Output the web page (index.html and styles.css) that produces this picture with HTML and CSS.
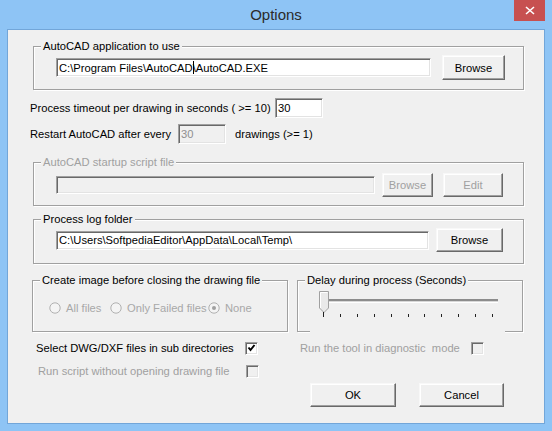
FILE: index.html
```html
<!DOCTYPE html>
<html>
<head>
<meta charset="utf-8">
<title>Options</title>
<link rel="stylesheet" href="styles.css">
</head>
<body>
<div class="window">
  <div class="titlebar">
    <span class="title">Options</span>
    <div class="close">
      <svg width="10" height="9" viewBox="0 0 10 9"><path d="M1 1 L9 8 M9 1 L1 8" stroke="#fff" stroke-width="1.6" fill="none"/></svg>
    </div>
  </div>
  <div class="client">
    <fieldset class="group g-app">
      <legend>AutoCAD application to use</legend>
      <div class="row r-app">
        <div class="tb tb-app">C:\Program Files\AutoCAD<span class="caret"></span>\AutoCAD.EXE</div>
        <div class="btn btn-app">Browse</div>
      </div>
    </fieldset>

    <div class="line l-timeout">
      <span class="lbl w-timeout">Process timeout per drawing in seconds ( &gt;= 10)</span>
      <div class="tb num">30</div>
    </div>
    <div class="line l-restart">
      <span class="lbl w-restart">Restart AutoCAD after every</span>
      <div class="tb num disabled">30</div>
      <span class="lbl after">drawings (&gt;= 1)</span>
    </div>

    <fieldset class="group g-script disabled">
      <legend>AutoCAD startup script file</legend>
      <div class="row r-script">
        <div class="tb tb-script disabled"></div>
        <div class="btn btn-sbrowse disabled">Browse</div>
        <div class="btn btn-edit disabled">Edit</div>
      </div>
    </fieldset>

    <fieldset class="group g-log">
      <legend>Process log folder</legend>
      <div class="row r-log">
        <div class="tb tb-log">C:\Users\SoftpediaEditor\AppData\Local\Temp\</div>
        <div class="btn btn-log">Browse</div>
      </div>
    </fieldset>

    <div class="pair">
      <fieldset class="group g-image">
        <legend>Create image before closing the drawing file</legend>
        <div class="radios">
          <div class="radio ri-1 disabled">
            <svg width="12" height="12" viewBox="0 0 12 12"><circle cx="6" cy="6" r="5.2" fill="#f4f4f4" stroke="#b0b0b0" stroke-width="1"/></svg>
            <span>All files</span>
          </div>
          <div class="radio ri-2 disabled">
            <svg width="12" height="12" viewBox="0 0 12 12"><circle cx="6" cy="6" r="5.2" fill="#f4f4f4" stroke="#b0b0b0" stroke-width="1"/></svg>
            <span>Only Failed files</span>
          </div>
          <div class="radio ri-3 disabled">
            <svg width="12" height="12" viewBox="0 0 12 12"><circle cx="6" cy="6" r="5.2" fill="#f4f4f4" stroke="#b0b0b0" stroke-width="1"/><circle cx="6" cy="6" r="2" fill="#a0a0a0"/></svg>
            <span>None</span>
          </div>
        </div>
      </fieldset>
      <fieldset class="group g-delay">
        <legend>Delay during process (Seconds)</legend>
        <div class="trackbar">
          <svg width="195" height="46" viewBox="0 0 195 46">
            <rect x="14" y="12" width="174" height="2" fill="#8c8c8c"/>
            <rect x="14" y="14" width="174" height="1" fill="#d8d8d8"/>
            <rect x="14" y="15" width="174" height="1" fill="#ffffff"/>
            <polygon points="9.5,4.5 18.5,4.5 18.5,21 14,25.5 9.5,21" fill="#e9e9e9" stroke="#a0a0a0" stroke-width="1"/>
            <polyline points="10.5,21 10.5,5.5 17.5,5.5" fill="none" stroke="#ffffff" stroke-width="1"/>
            <rect x="13" y="25" width="1" height="5" fill="#222"/>
            <rect x="30" y="27" width="1" height="3" fill="#222"/>
            <rect x="47" y="27" width="1" height="3" fill="#222"/>
            <rect x="64" y="27" width="1" height="3" fill="#222"/>
            <rect x="81" y="27" width="1" height="3" fill="#222"/>
            <rect x="98" y="27" width="1" height="3" fill="#222"/>
            <rect x="114" y="27" width="1" height="3" fill="#222"/>
            <rect x="131" y="27" width="1" height="3" fill="#222"/>
            <rect x="148" y="27" width="1" height="3" fill="#222"/>
            <rect x="165" y="27" width="1" height="3" fill="#222"/>
            <rect x="182" y="27" width="1" height="3" fill="#222"/>
          </svg>
        </div>
      </fieldset>
    </div>

    <div class="checks c-1">
      <span class="lbl w-sub">Select DWG/DXF files in sub directories</span>
      <div class="cb">
        <svg width="11" height="11" viewBox="0 0 11 11"><path d="M2.5 4.5 L4.5 7 L8.5 2" stroke="#000" stroke-width="2" fill="none"/></svg>
      </div>
      <span class="lbl w-diag disabled">Run the tool in diagnostic&nbsp; mode</span>
      <div class="cb disabled"></div>
    </div>
    <div class="checks c-2">
      <span class="lbl w-noopen disabled">Run script without opening drawing file</span>
      <div class="cb disabled"></div>
    </div>

    <div class="actions">
      <div class="btn btn-ok">OK</div>
      <div class="btn btn-cancel">Cancel</div>
    </div>
  </div>
</div>
</body>
</html>
```

FILE: styles.css
```css
* { box-sizing: border-box; }

body {
  margin: 0;
  font-family: "Liberation Sans", Arial, sans-serif;
  font-size: 11.2px;
  color: #000;
}

.window {
  width: 552px;
  height: 431px;
  background: #8ec4f5;
  padding: 0 7px 7px 7px;
  display: flex;
  flex-direction: column;
}

.titlebar {
  height: 29px;
  display: grid;
  grid-template-columns: 1fr auto 1fr;
  align-items: start;
}

.title {
  grid-column: 2;
  font-size: 15px;
  line-height: 30px;
  color: #2b2b2b;
}

.close {
  grid-column: 3;
  justify-self: end;
  width: 31px;
  height: 21px;
  background: #c75050;
  display: flex;
  align-items: center;
  justify-content: center;
}

.client {
  flex: 1;
  background: #f0f0f0;
  border: 1px solid #72a6d9;
}

/* group boxes */
.group {
  margin: 0;
  border: 1px solid #a0a0a0;
  box-shadow: inset 1px 1px 0 #fff, 1px 1px 0 #fff;
  padding: 0 0 9px 7px;
  min-inline-size: 0;
}

.group legend {
  padding: 0 2px;
  margin: 0;
  line-height: 13px;
  background: #f0f0f0;
  white-space: nowrap;
}

.group.disabled legend { color: #a0a0a0; }

.row {
  display: flex;
  align-items: center;
  margin-left: 15px;
}

/* text boxes */
.tb {
  background: #fff;
  border: 1px solid;
  border-color: #a0a0a0 #fff #fff #a0a0a0;
  box-shadow: inset 1px 1px 0 #696969, inset -1px -1px 0 #e3e3e3;
  padding: 0 0 0 2px;
  height: 19px;
  display: flex;
  align-items: center;
  white-space: nowrap;
  overflow: hidden;
}

.tb.disabled {
  background: #f0f0f0;
  color: #8f8f8f;
}

.caret {
  display: inline-block;
  width: 0;
  height: 13px;
  border-left: 1px solid #000;
  margin-right: -1px;
}

/* buttons */
.btn {
  background: #f0f0f0;
  border: 1px solid;
  border-color: #f8f8f8 #696969 #696969 #f8f8f8;
  box-shadow: inset -1px -1px 0 #a0a0a0, inset 1px 1px 0 #fff;
  display: flex;
  align-items: center;
  justify-content: center;
  height: 25px;
}

.btn.disabled { color: #a0a0a0; }

/* group 1 */
.g-app {
  margin: 10px 0 0 25px;
  width: 491px;
}
.r-app { margin-top: 2px; height: 25px; }
.tb-app { width: 375px; }
.btn-app { width: 63px; margin-left: 11px; }

/* simple lines */
.line {
  display: flex;
  align-items: center;
  height: 20px;
  margin-left: 22px;
}
.lbl { white-space: nowrap; line-height: 13px; }
.lbl.disabled { color: #a0a0a0; }

.l-timeout { margin-top: 8px; }
.l-restart { margin-top: 6px; }
.w-timeout { width: 245px; }
.w-restart { width: 148px; }
.num { width: 48px; height: 20px; }
.after { margin-left: 9px; }

/* group 2 */
.g-script {
  margin: 12px 0 0 25px;
  width: 491px;
  padding-bottom: 8px;
}
.r-script { margin-top: 4px; height: 24px; }
.tb-script { width: 319px; height: 18px; }
.btn-sbrowse { width: 51px; height: 24px; margin-left: 7px; }
.btn-edit { width: 60px; height: 24px; margin-left: 10px; }

/* group 3 */
.g-log {
  margin: 7px 0 0 25px;
  width: 491px;
  padding-bottom: 11px;
}
.r-log { margin-top: 2px; height: 24px; }
.tb-log { width: 373px; }
.btn-log { width: 67px; height: 24px; margin-left: 7px; }

/* bottom pair */
.pair {
  display: flex;
  margin: 10px 0 0 24px;
}
.g-image {
  width: 256px;
  height: 58px;
  padding-bottom: 0;
}
.g-delay {
  width: 226px;
  height: 58px;
  margin-left: 9px;
  padding-bottom: 0;
}

.radios {
  display: flex;
  align-items: center;
  margin: 14px 0 0 9px;
  height: 13px;
}
.radio {
  display: flex;
  align-items: center;
  gap: 5px;
  color: #a8a8a8;
  white-space: nowrap;
}
.ri-1 { width: 61px; }
.ri-2 { width: 98px; }

.trackbar {
  width: 195px;
  height: 46px;
  margin-left: 5px;
  background: #f0f0f0;
  position: relative;
}
.trackbar svg { display: block; }

/* checkboxes */
.checks {
  display: flex;
  align-items: center;
  height: 13px;
}
.c-1 { margin: 10px 0 0 28px; }
.c-2 { margin: 10px 0 0 30px; }
.w-sub { width: 209px; }
.w-diag { width: 171px; margin-left: 42px; }
.w-noopen { width: 208px; }

.cb {
  width: 13px;
  height: 13px;
  background: #fff;
  border: 1px solid;
  border-color: #a0a0a0 #fff #fff #a0a0a0;
  box-shadow: inset 1px 1px 0 #696969, inset -1px -1px 0 #e3e3e3;
  display: flex;
  align-items: center;
  justify-content: center;
}
.cb svg { display: block; }
.cb.disabled { background: #f0f0f0; }

/* actions */
.actions {
  display: flex;
  justify-content: flex-end;
  gap: 23px;
  margin: 5px 40px 0 0;
}
.btn-ok { width: 86px; height: 24px; }
.btn-cancel { width: 85px; height: 24px; }
```
